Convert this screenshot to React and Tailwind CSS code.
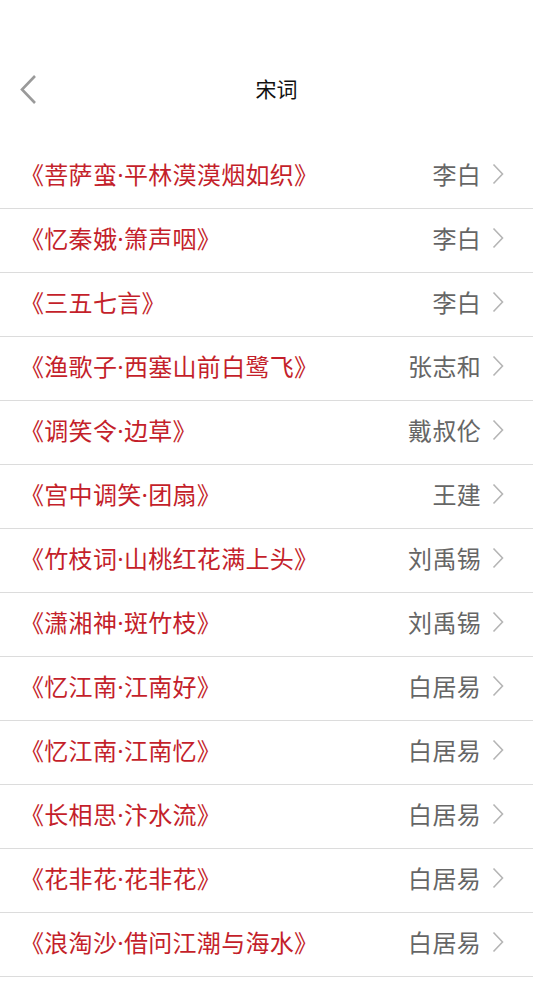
import React from "react";

const rows = [
  ["菩萨蛮", "平林漠漠烟如织"],
  ["忆秦娥", "箫声咽"],
  ["三五七言", null],
  ["渔歌子", "西塞山前白鹭飞"],
  ["调笑令", "边草"],
  ["宫中调笑", "团扇"],
  ["竹枝词", "山桃红花满上头"],
  ["潇湘神", "斑竹枝"],
  ["忆江南", "江南好"],
  ["忆江南", "江南忆"],
  ["长相思", "汴水流"],
  ["花非花", "花非花"],
  ["浪淘沙", "借问江潮与海水"],
];

const authors = ["李白", "李白", "李白", "张志和", "戴叔伦", "王建", "刘禹锡", "刘禹锡", "白居易", "白居易", "白居易", "白居易", "白居易"];

const font = { fontFamily: '"Noto Sans CJK SC", "Noto Sans", sans-serif' };
const dotFont = { fontFamily: '"Noto Sans", "Liberation Sans", sans-serif' };

export default function App() {
  return (
    <div className="w-[553px] h-[983px] bg-white overflow-hidden" style={font}>
      <div className="h-[56px]" />
      <div className="relative h-[66px] flex items-center justify-center">
        <svg className="absolute left-[18px] top-[18px]" width="20" height="30" viewBox="0 0 20 30">
          <path d="M17 2 L4 15.5 L17 29" fill="none" stroke="#9a9a9a" strokeWidth="2.6" />
        </svg>
        <span className="text-[21px] text-[#111] leading-none pb-[2px]">宋词</span>
      </div>
      <div className="h-[23px]" />
      <div className="w-[533px]">
        {rows.map(([a, b], i) => (
          <div key={i} className="h-[64px] flex items-center border-b border-[#dcdcdc] pl-[20px] pr-[29px] pb-[5px]">
            <span className="text-[24px] text-[#c41f2b] leading-none flex-1 tracking-[0.3px]">
              《{a}
              {b && <span style={dotFont}>·</span>}
              {b}》
            </span>
            <span className="text-[24px] text-[#666666] leading-none tracking-[0.3px]">{authors[i]}</span>
            <svg className="ml-[11px]" width="12" height="22" viewBox="0 0 12 22">
              <path d="M1.5 1.5 L10.5 11 L1.5 20.5" fill="none" stroke="#b5b5b5" strokeWidth="1.6" />
            </svg>
          </div>
        ))}
      </div>
    </div>
  );
}
